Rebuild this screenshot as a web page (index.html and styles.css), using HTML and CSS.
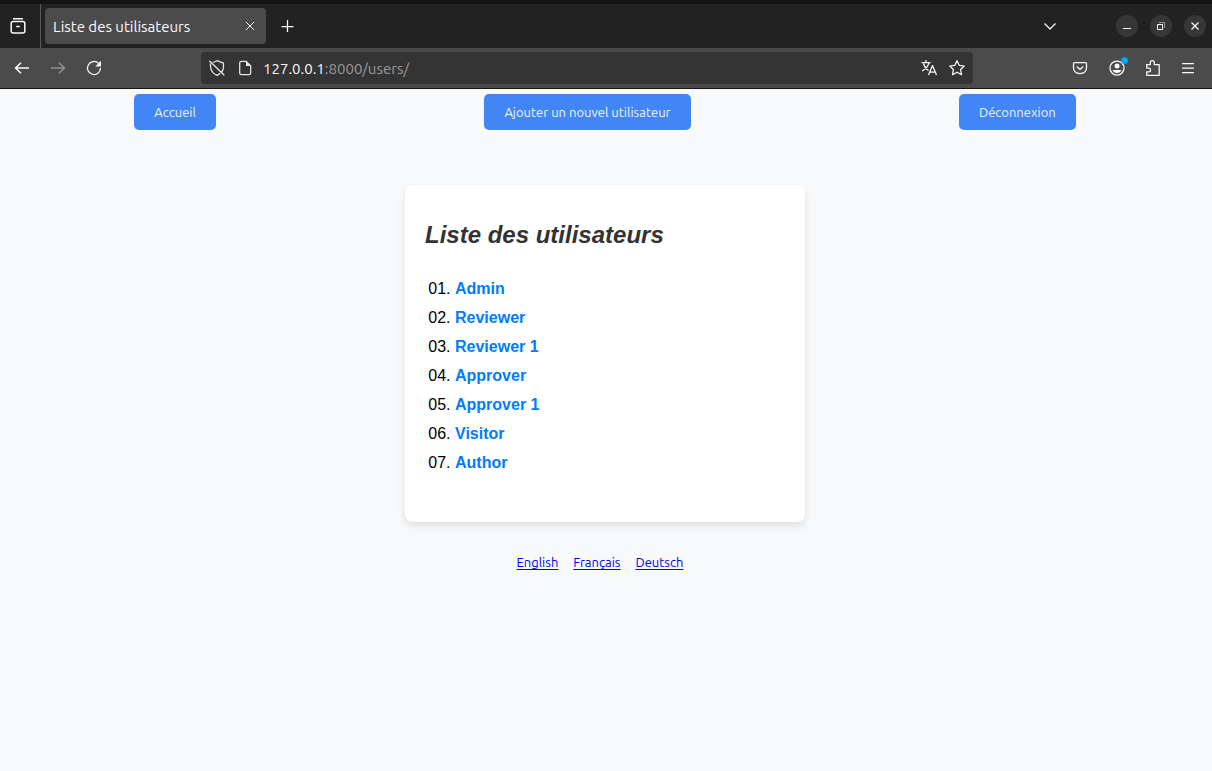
FILE: index.html
```html
<!DOCTYPE html>
<html lang="fr">
<head>
<meta charset="utf-8">
<meta name="viewport" content="width=device-width, initial-scale=1">
<title>Liste des utilisateurs</title>
<link rel="stylesheet" href="styles.css">
</head>
<body>
<header class="browser">
  <div class="tabbar">
    <div class="recent">
      <button class="icon" aria-label="Onglets récents"><svg width="18" height="18" viewBox="0 0 18 18"><path d="M4 1.700h10M2.200 6.500q0-2 2-2h9.600q2 0 2 2v7.500q0 2-2 2H4.200q-2 0-2-2zM7.200 9.500h3.600"/></svg></button>
    </div>
    <div class="tab">
      <span class="tab-title">Liste des utilisateurs</span>
      <button class="icon tab-close" aria-label="Fermer l'onglet"><svg width="10" height="10" viewBox="0 0 10 10"><path class="thin" d="M1 1l8 8M9 1l-8 8"/></svg></button>
    </div>
    <button class="icon new-tab" aria-label="Nouvel onglet"><svg width="14" height="14" viewBox="0 0 14 14"><path class="fine" d="M6.500 1v12M.5 7.500h12"/></svg></button>
    <button class="icon tab-list" aria-label="Lister les onglets"><svg width="14" height="14" viewBox="0 0 14 14"><path class="fine" d="M1.500 4.500L7 10l5.500-5.500"/></svg></button>
    <div class="window-controls">
      <button class="round" aria-label="Réduire"><svg width="12" height="12" viewBox="0 0 12 12"><path class="thin" d="M2 8.500h8"/></svg></button>
      <button class="round" aria-label="Restaurer"><svg width="12" height="12" viewBox="0 0 12 12"><path class="thin" d="M2.500 4.500h5v5h-5z"/><path class="faint" d="M4 2.500h5.500V8"/></svg></button>
      <button class="round" aria-label="Fermer"><svg width="12" height="12" viewBox="0 0 12 12"><path class="fine" d="M2.500 2.500l7 7M9.500 2.500l-7 7"/></svg></button>
    </div>
  </div>
  <div class="toolbar">
    <div class="history">
      <button class="icon" aria-label="Précédent"><svg width="16" height="16" viewBox="0 0 16 16"><path d="M15 8H1.500M7 2.700L1.500 8 7 13.300"/></svg></button>
      <button class="icon dim" aria-label="Suivant"><svg width="16" height="16" viewBox="0 0 16 16"><path d="M1 8h13.500M9 2.700L14.500 8 9 13.300"/></svg></button>
      <button class="icon" aria-label="Actualiser"><svg width="16" height="16" viewBox="0 0 16 16"><path class="fine" d="M12.600 3.400A6.500 6.500 0 1 0 14.500 8"/><path class="solid" d="M15 .8v5.700H9.300z"/></svg></button>
    </div>
    <div class="address">
      <svg class="glyph" width="18" height="18" viewBox="0 0 18 18"><path class="fine" d="M5 3.500L9 1.700l6.500 2.500v3.300q0 3-1.800 5.700M2.500 4.500v3Q3 14 9 16.300q1.800-.6 3.300-2M1.300 1.700l15 14.600"/></svg>
      <svg class="glyph" width="14" height="16" viewBox="0 0 14 16"><path class="fine" d="M1.700 3q0-1.700 1.700-1.700H8L12.700 6v7q0 1.700-1.700 1.700H3.400Q1.700 14.700 1.700 13z"/><path class="solid" d="M8 1v5h5z"/></svg>
      <output class="url" aria-label="Adresse"><b>127.0.0.1</b>:8000/users/</output>
      <button class="icon" aria-label="Traduire"><svg width="18" height="18" viewBox="0 0 18 18"><path class="fine" d="M1.500 3.500h9M6 1v2.500M9 3.700C8 7.500 5.500 10.500 2 12M3.500 4.500C4.500 8 6 10 8.500 11.500M8.500 16L12.500 6.500 16.500 16M10 13h5"/></svg></button>
      <button class="icon" aria-label="Marquer cette page"><svg width="18" height="18" viewBox="0 0 18 18"><path class="fine" d="M9 1.700l2.200 4.600 5 .7-3.600 3.500.9 5.200L9 13.200l-4.500 2.500.9-5.200L1.800 7l5-.7z"/></svg></button>
    </div>
    <div class="tools">
      <button class="icon" aria-label="Pocket"><svg width="16" height="16" viewBox="0 0 16 16"><path class="fine" d="M1.500 3.500q0-1 1-1h11q1 0 1 1v4q0 6-6.500 6t-6.500-6zM4.700 6.500L8 9.500l3.300-3"/></svg></button>
      <button class="icon account" aria-label="Compte"><svg width="18" height="18" viewBox="0 0 18 18"><circle class="fine" cx="9" cy="9" r="7"/><circle class="solid" cx="9" cy="7" r="2.500"/><path class="solid" d="M4.500 11h9q-1.200 3-4.500 3t-4.500-3z"/></svg><span class="dot"></span></button>
      <button class="icon" aria-label="Extensions"><svg width="16" height="18" viewBox="0 0 16 18"><path class="fine" d="M1.700 9V5.500h3.600V3.700q0-2 2-2t2 2v1.800h4.900v10.800H1.700v-3.500h2.200q1.700 0 1.700-1.900T3.900 9z"/></svg></button>
      <button class="icon" aria-label="Menu"><svg width="14" height="14" viewBox="0 0 14 14"><path class="fine" d="M1 2.500h12M1 7h12M1 11.500h12"/></svg></button>
    </div>
  </div>
</header>
<div class="page">
  <nav class="actions">
    <button class="action">Accueil</button>
    <button class="action">Ajouter un nouvel utilisateur</button>
    <button class="action">Déconnexion</button>
  </nav>
  <main class="card">
    <h1 class="title">Liste des utilisateurs</h1>
    <ol class="users">
      <li><a href="#">Admin</a></li>
      <li><a href="#">Reviewer</a></li>
      <li><a href="#">Reviewer 1</a></li>
      <li><a href="#">Approver</a></li>
      <li><a href="#">Approver 1</a></li>
      <li><a href="#">Visitor</a></li>
      <li><a href="#">Author</a></li>
    </ol>
  </main>
  <footer class="languages">
    <a href="#" lang="en">English</a>
    <a href="#" lang="fr">Français</a>
    <a href="#" lang="de">Deutsch</a>
  </footer>
</div>
</body>
</html>
```
FILE: styles.css
```css
* { box-sizing: border-box; }

body {
  margin: 0;
  min-height: 100vh;
  background: #f8f9fb;
  font-family: "Liberation Sans", Arial, sans-serif;
  font-size: 16px;
}

button {
  border: 0;
  padding: 0;
  background: none;
  color: inherit;
  font: inherit;
}

svg {
  display: block;
  fill: none;
  stroke: currentColor;
  stroke-width: 1.5;
  stroke-linejoin: round;
}

.fine { stroke-width: 1.25; }
.thin { stroke-width: 1; }
.faint { stroke-width: 1; opacity: .5; }
.solid { fill: currentColor; stroke: none; }

.browser {
  color: #fbfbfe;
  font-family: Ubuntu, "Noto Sans", sans-serif;
  font-size: 15px;
  border-bottom: 1px solid #161616;
}

.icon {
  display: flex;
  align-items: center;
  justify-content: center;
  flex: none;
}

.tabbar {
  display: flex;
  align-items: center;
  height: 48px;
  border-top: 4px solid #131313;
  background: #222;
}

.recent {
  display: flex;
  align-items: center;
  align-self: stretch;
  padding: 0 13px 0 9px;
  border-right: 1px solid #5a5a5a;
}

.tab {
  display: flex;
  align-items: center;
  justify-content: space-between;
  width: 221px;
  height: 36px;
  margin-left: 4px;
  padding: 0 11px 0 8px;
  border-radius: 4px;
  background: #4b4b4b;
}

.new-tab { margin-left: 15px; }
.tab-list { margin-left: auto; }

.window-controls {
  display: flex;
  gap: 12px;
  margin: 0 6px 0 59px;
}

.round {
  display: grid;
  place-items: center;
  width: 22px;
  height: 22px;
  border-radius: 50%;
  background: #373737;
}

.toolbar {
  display: flex;
  align-items: center;
  justify-content: space-between;
  height: 40px;
  padding: 0 17px 0 14px;
  background: #4b4b4b;
}

.history {
  display: flex;
  gap: 20px;
  width: 187px;
}

.dim { opacity: .4; }

.address {
  display: flex;
  align-items: center;
  flex: 1;
  gap: 10px;
  height: 32px;
  padding: 0 7px;
  border-radius: 4px;
  background: #343434;
}

.glyph { flex: none; opacity: .9; }
.glyph + .glyph { margin-left: 2px; }

.url {
  flex: 1;
  padding-left: 1px;
  color: #9b9b9c;
}

.url b {
  color: #fbfbfe;
  font-weight: 400;
}

.tools {
  display: flex;
  align-items: center;
  justify-content: space-between;
  width: 123px;
  margin-left: 99px;
}

.account { position: relative; }

.dot {
  position: absolute;
  top: -2px;
  right: -2px;
  width: 7px;
  height: 7px;
  border-radius: 50%;
  background: #00a8f0;
}

.page {
  padding: 5px 2px 0 0;
}

.actions {
  display: flex;
  justify-content: space-around;
}

.action {
  height: 36px;
  padding: 0 20px;
  border-radius: 5px;
  background: #4285f4;
  color: #f0f4fd;
  font-family: Ubuntu, "Noto Sans", sans-serif;
  font-size: 13px;
}

.card {
  max-width: 400px;
  margin: 55px auto 0;
  padding: 36px 20px 45px;
  border-radius: 8px;
  background: #fff;
  box-shadow: 0 4px 8px rgba(0, 0, 0, .1);
}

.title {
  margin: 0 0 25px;
  color: #333;
  font-size: 24px;
  font-style: italic;
  line-height: 28px;
}

.users {
  margin: 0;
  padding-left: 30px;
  list-style: decimal-leading-zero;
  line-height: 29px;
}

.users a {
  color: #007bff;
  font-weight: 700;
  text-decoration: none;
}

.languages {
  display: flex;
  justify-content: center;
  gap: 15px;
  margin-top: 33px;
  padding-right: 10px;
  font-family: Ubuntu, "Noto Sans", sans-serif;
  font-size: 13px;
}

.languages a {
  color: #00e;
  text-underline-offset: 2px;
}
```
